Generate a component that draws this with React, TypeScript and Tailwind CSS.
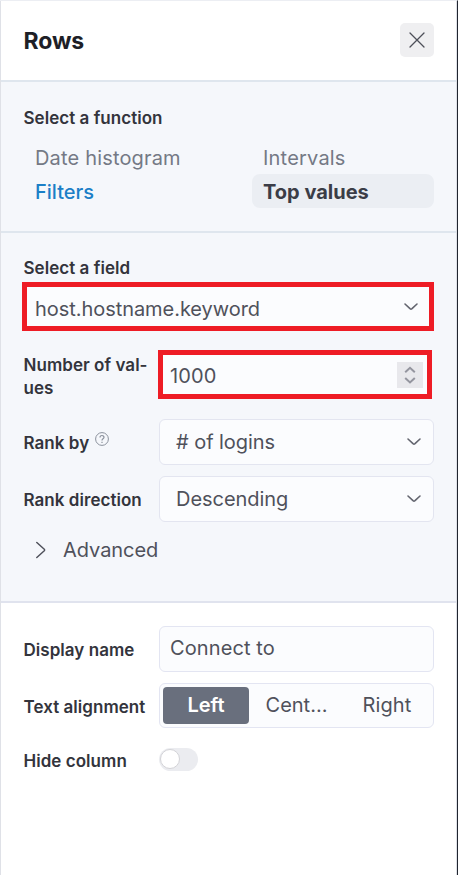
import type { ReactNode } from "react";

function Chevron({ className = "" }: { className?: string }) {
  return (
    <svg className={className} width="16" height="10" viewBox="0 0 16 10" fill="none" stroke="#63656f" strokeWidth="1.6" strokeLinecap="round" strokeLinejoin="round">
      <path d="M2 2 7 6.7Q8 7.5 9 6.7L14 2" />
    </svg>
  );
}

function Label({ children }: { children: ReactNode }) {
  return <div className="ml-[0.5px] w-[135.5px] shrink-0 whitespace-nowrap pt-[2px] text-[17px] font-semibold leading-[22.5px] tracking-[0.04px] text-[#33343c]">{children}</div>;
}

function Select({ value }: { value: string }) {
  return (
    <div className="flex h-[46px] w-[275px] items-center justify-between rounded-[6px] border-[1.5px] border-[#e3e5f0] bg-[#fbfcfe] pl-[16px] pr-[11px] text-[20px] tracking-[-0.05px] text-[#4f515b]">
      <span>{value}</span>
      <Chevron />
    </div>
  );
}

export default function App() {
  return (
    <div className="flex h-[875px] w-[458px] flex-col border-r border-t border-r-[#20252f] border-t-[#eceef3] bg-white font-['Inter',sans-serif]">
      <div className="flex grow flex-col border-l border-r border-l-[#dfe1e7] border-r-[#dfe1e7]">
        <header className="flex h-[79px] items-center justify-between pb-px pl-[22.5px] pr-[22px]">
          <h1 className="pt-px text-[23px] font-bold leading-[30px] tracking-[-0.1px] text-[#1e1f27]">Rows</h1>
          <button className="flex size-[34px] items-center justify-center rounded-[5px] bg-[#efeff1]" aria-label="Close">
            <svg width="16" height="16" viewBox="0 0 16 16" fill="none" stroke="#4d4f59" strokeWidth="1.3" strokeLinecap="round">
              <path d="M1 1 15 15M15 1 1 15" />
            </svg>
          </button>
        </header>

        <section className="h-[151px] border-t-2 border-[#dfe6ee] bg-[#f5f7fb] pl-[22px] pr-[22px] pt-[23px]">
          <Label>Select a function</Label>
          <div className="mt-[10.5px] grid grid-cols-[229px_182px] text-[20px] leading-[32px]">
            <div className="pl-[12px] pt-[2px] tracking-[0.17px] text-[#747985]">Date histogram</div>
            <div className="pl-[11px] pt-[2px] tracking-[0.2px] text-[#747985]">Intervals</div>
            <div className="pl-[12px] pt-[2px] font-medium text-[#1b7fc7]">Filters</div>
            <div className="rounded-[8px] bg-[#ebeef3] pl-[11px] pt-[2px] font-bold text-[#3b3d47]">Top values</div>
          </div>
        </section>

        <section className="flex h-[370px] flex-col border-t-2 border-[#dfe6ee] bg-[#f5f7fb] pl-[21px] pr-[22px] pt-[22px]">
          <div className="h-[24px] pl-px"><Label>Select a field</Label></div>
          <div className="mt-[3px] flex h-[49px] w-[412px] items-center justify-between border-[5px] border-[#ee1c25] bg-[#fbfcfe] pl-[8px] pr-[10px] text-[20px] tracking-[-0.05px] text-[#4f515b]">
            <span className="pt-[5px]">host.hostname.keyword</span>
            <Chevron />
          </div>
          <div className="mt-[19px] flex h-[49px] items-center pl-px">
            <div className="pt-[2px]"><Label>Number of val-<br />ues</Label></div>
            <div className="-ml-px flex h-[49px] w-[274px] items-center justify-between border-[5px] border-[#ee1c25] bg-[#fbfcfe] pl-[7px] pr-[4px] text-[20px] tracking-[0.15px] text-[#4f515b]">
              <span className="pt-[2px]">1000</span>
              <div className="flex h-[26px] w-[26px] items-center justify-center bg-[#e8e8ec]">
                <svg width="12" height="18" viewBox="0 0 12 18" fill="none" stroke="#94959f" strokeWidth="2">
                  <path d="M1.2 6.2 6 1.8 10.8 6.2M1.2 12 6 16.4 10.8 12" />
                </svg>
              </div>
            </div>
          </div>
          <div className="mt-[20px] flex items-center pl-px">
            <Label>
              <span className="flex">
                Rank by
                <svg className="ml-[6px]" width="14" height="14" viewBox="0 0 14 14" fill="none" stroke="#8b919c" strokeWidth="1">
                  <circle cx="7" cy="7" r="6.4" />
                  <path d="M5 5.5C5 2.8 9 2.9 9 5.3 9 6.8 7 6.8 7 8.4M7 9.7v1.2" strokeWidth="1.2" />
                </svg>
              </span>
            </Label>
            <Select value="# of logins" />
          </div>
          <div className="mt-[11px] flex items-center pl-px">
            <Label>Rank direction</Label>
            <Select value="Descending" />
          </div>
          <div className="mt-[11px] flex h-[34px] items-center pl-[13px] text-[20px] tracking-[-0.05px] text-[#4f515b]">
            <svg width="12" height="18" viewBox="0 0 12 18" fill="none" stroke="#4f515b" strokeWidth="1.5" strokeLinecap="round" strokeLinejoin="round">
              <path d="M1.8 1.5 9.3 8.2Q10.1 9 9.3 9.8L1.8 16.5" />
            </svg>
            <span className="ml-[16px]">Advanced</span>
          </div>
        </section>

        <section className="flex grow flex-col border-t-2 border-[#e0e3ee] bg-white pl-[22px] pr-[22px] pt-[23px]">
          <div className="flex items-center">
            <Label>Display name</Label>
            <div className="flex h-[46px] w-[275px] items-center rounded-[6px] border-[1.5px] border-[#e3e5f2] bg-[#fbfcfe] pb-[2px] pl-[10px] text-[20px] tracking-[0.1px] text-[#4f515b]">Connect to</div>
          </div>
          <div className="mt-[11px] flex items-center">
            <div className="pt-px"><Label>Text alignment</Label></div>
            <div className="flex h-[45px] w-[275px] items-center rounded-[6px] border-[1.5px] border-[#e3e5f2] bg-[#fbfcfe] pl-[3px] text-[20px] text-[#4f515b]">
              <div className="flex h-[37px] w-[86px] items-center justify-center rounded-[4px] bg-[#696f7d] pb-px font-semibold text-white">Left</div>
              <div className="w-[95px] pb-px text-center">Cent...</div>
              <div className="w-[86px] pb-px text-center tracking-[0.1px]">Right</div>
            </div>
          </div>
          <div className="mt-[18px] flex items-center">
            <div className="pt-[2px]"><Label>Hide column</Label></div>
            <div className="flex h-[23px] w-[39px] items-center rounded-full bg-[#ebecf0] pl-px">
              <div className="size-[20px] rounded-full border border-[#d3d3d7] bg-white" />
            </div>
          </div>
        </section>
      </div>
    </div>
  );
}
